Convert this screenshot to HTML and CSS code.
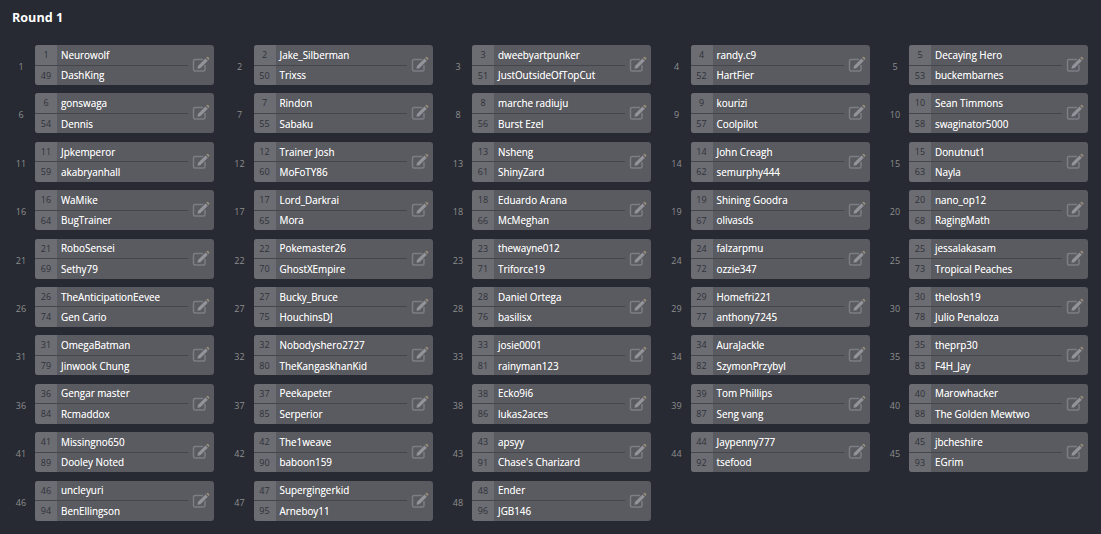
FILE: index.html
```html
<!DOCTYPE html>
<html lang="en">
<head>
<meta charset="utf-8">
<title>Round 1</title>
<link rel="stylesheet" href="styles.css">
</head>
<body>
<svg class="defs" width="0" height="0" aria-hidden="true"><defs><g id="edit">
<path d="M12 4.5H4Q2.5 4.5 2.5 6V14.5Q2.5 16 4 16H12.5Q14 16 14 14.5V10" fill="none" stroke="#7d7e85" stroke-width="1.5"/>
<path d="M7 11L14.5 3.5L16.8 5.8L9.3 13.3L6.5 13.8Z" fill="#93949a"/>
<path d="M15.2 2.8L16 2Q16.6 1.6 17.2 2.1L18.2 3.1Q18.6 3.6 18.2 4.2L17.5 5.1Z" fill="#968c78"/>
</g></defs></svg>
<h1 class="title">Round 1</h1>
<div class="grid" id="grid"></div>
<script>
var m=[["Neurowolf","DashKing"],["Jake_Silberman","Trixss"],["dweebyartpunker","JustOutsideOfTopCut"],["randy.c9","HartFier"],["Decaying Hero","buckembarnes"],["gonswaga","Dennis"],["Rindon","Sabaku"],["marche radiuju","Burst Ezel"],["kourizi","Coolpilot"],["Sean Timmons","swaginator5000"],["Jpkemperor","akabryanhall"],["Trainer Josh","MoFoTY86"],["Nsheng","ShinyZard"],["John Creagh","semurphy444"],["Donutnut1","Nayla"],["WaMike","BugTrainer"],["Lord_Darkrai","Mora"],["Eduardo Arana","McMeghan"],["Shining Goodra","olivasds"],["nano_op12","RagingMath"],["RoboSensei","Sethy79"],["Pokemaster26","GhostXEmpire"],["thewayne012","Triforce19"],["falzarpmu","ozzie347"],["jessalakasam","Tropical Peaches"],["TheAnticipationEevee","Gen Cario"],["Bucky_Bruce","HouchinsDJ"],["Daniel Ortega","basilisx"],["Homefri221","anthony7245"],["thelosh19","Julio Penaloza"],["OmegaBatman","Jinwook Chung"],["Nobodyshero2727","TheKangaskhanKid"],["josie0001","rainyman123"],["AuraJackle","SzymonPrzybyl"],["theprp30","F4H_Jay"],["Gengar master","Rcmaddox"],["Peekapeter","Serperior"],["Ecko9i6","lukas2aces"],["Tom Phillips","Seng vang"],["Marowhacker","The Golden Mewtwo"],["Missingno650","Dooley Noted"],["The1weave","baboon159"],["apsyy","Chase's Charizard"],["Jaypenny777","tsefood"],["jbcheshire","EGrim"],["uncleyuri","BenEllingson"],["Supergingerkid","Arneboy11"],["Ender","JGB146"]];
var h="";
m.forEach(function(p,i){
  var n=i+1;
  h+='<div class="match"><span class="ident">'+n+'</span><div class="card"><div class="players">'+
     '<div class="player"><span class="seed">'+n+'</span><span class="name">'+p[0]+'</span></div>'+
     '<div class="player second"><span class="seed">'+(n+48)+'</span><span class="name">'+p[1]+'</span></div>'+
     '</div><svg class="edit" width="22" height="20" viewBox="0 0 22 20"><use href="#edit"/></svg></div></div>';
});
document.getElementById("grid").innerHTML=h;
</script>
</body>
</html>
```
FILE: styles.css
```css
html, body { margin: 0; padding: 0; }
body {
  background: #272a33;
  height: 534px;
  overflow: hidden;
  font-family: "Open Sans", sans-serif;
  padding: 9px 13px 0 12px;
  box-sizing: border-box;
}
.defs { position: absolute; }
.title {
  margin: 0 0 18px;
  font-size: 12.6px;
  line-height: 18px;
  font-weight: 700;
  color: #fff;
}
.grid {
  display: grid;
  grid-template-columns: repeat(5, 179px);
  column-gap: 39.5px;
  row-gap: 8.4px;
  margin-left: 23px;
  margin-top: 2px;
}
.match { position: relative; }
.ident {
  position: absolute;
  left: -23px;
  top: 0;
  width: 18px;
  line-height: 44px;
  font-size: 9px;
  color: #8d8e8e;
  text-align: center;
}
.card {
  display: flex;
  align-items: center;
  height: 40px;
  background: #5a5b61;
  border-radius: 3px;
}
.players { flex: 1; min-width: 0; align-self: stretch; display: flex; flex-direction: column; }
.player { flex: 1; display: flex; align-items: center; font-size: 9.9px; color: #fff; }
.player.second { border-top: 1px solid #45464c; }
.seed {
  width: 22px;
  align-self: stretch;
  background: #6c6d73;
  color: #2f3138;
  font-size: 9px;
  text-align: center;
  line-height: 19px;
  flex: none;
}
.player:first-child .seed { border-top-left-radius: 3px; }
.second .seed { border-bottom-left-radius: 3px; }
.name { padding-left: 4px; white-space: nowrap; text-shadow: 0 0 0.6px rgba(255, 255, 255, 0.5); }
.edit { flex: none; margin: 0 1px 0 3px; }
```
